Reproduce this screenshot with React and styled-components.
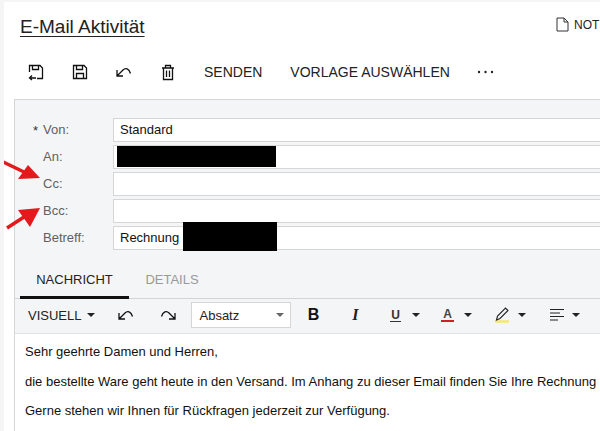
import React from 'react';
import styled, { createGlobalStyle } from 'styled-components';

const Global = createGlobalStyle`
  html, body { margin: 0; padding: 0; background: #f5f5f5; overflow: hidden; }
  body { width: 600px; height: 431px; font-family: "Liberation Sans", Arial, sans-serif; }
`;
const Page = styled.div`
  position: relative; width: 596px; height: 429px; margin: 2px 0 0 4px; background: #fff; overflow: hidden;
`;
const Header = styled.div`
  display: flex; justify-content: space-between; align-items: flex-start; height: 50px; padding: 13px 0 0 16px; box-sizing: border-box;
`;
const Title = styled.h1`
  margin: 0; font-size: 19px; line-height: 24px; font-weight: 400; color: #222; text-decoration: underline; text-underline-offset: 3px; text-decoration-thickness: 1px;
`;
const Notes = styled.div`
  display: flex; align-items: center; gap: 5px; font-size: 12px; color: #222; padding-top: 2px; width: 44px; overflow: hidden; white-space: nowrap; flex: none;
`;
const Toolbar = styled.div`
  display: flex; align-items: center; height: 47px; padding: 0 0 8px 23px; box-sizing: border-box;
`;
const IconBtn = styled.span`
  display: flex; width: 18px; height: 18px; margin-right: ${p => p.$gap}px; color: #111;
`;
const TextBtn = styled.span`
  font-size: 14px; color: #222; margin-right: ${p => p.$gap}px; white-space: nowrap;
`;
const Panel = styled.div`
  margin-left: 10px; width: 640px; height: 340px; border: 1px solid #d6d6d6; border-bottom: 0; background: #f4f5f7;
`;
const Form = styled.div`
  display: flex; flex-direction: column; gap: 3px; padding: 18px 0 0 0; height: 150px; box-sizing: border-box;
`;
const Row = styled.div`
  display: flex; align-items: center; height: 24px;
`;
const Label = styled.label`
  position: relative; width: 98px; padding-left: 28px; padding-bottom: 1px; box-sizing: border-box; font-size: 13px; color: #5f5f5f; flex: none;
`;
const Star = styled.span`
  position: absolute; left: 18px; top: 1px; color: #333; font-size: 13px;
`;
const Field = styled.div`
  position: relative; flex: 1; height: 24px; box-sizing: border-box; border: 1px solid #d6d6d6; background: #fff; padding-left: 6px; font-size: 13px; line-height: 22px; color: #111;
`;
const Redact = styled.span`
  position: absolute; top: ${p => p.$top}px; left: ${p => p.$left}px; width: ${p => p.$w}px; height: ${p => p.$h}px; background: #000;
`;
const Tabs = styled.div`
  display: flex; height: 49px; border-bottom: 1px solid #d4d4d6; padding-left: 5px; box-sizing: border-box;
`;
const Tab = styled.div`
  width: ${p => p.$w}px; height: 49px; box-sizing: border-box; display: flex; justify-content: center; padding-top: 22px; font-size: 13px; color: ${p => p.$active ? '#222' : '#999'}; border-bottom: ${p => p.$active ? '3px solid #111' : '0'};
`;
const EditorBar = styled.div`
  display: flex; align-items: center; height: 35px; box-sizing: border-box; border-bottom: 1px solid #e2e3e5; padding: 0 0 2px 13px;
`;
const BarText = styled.span`
  font-size: 13px; color: #222;
`;
const Caret = styled.span`
  display: inline-block; flex: none; width: 0; height: 0; border-left: 4px solid transparent; border-right: 4px solid transparent; border-top: 4px solid ${p => p.$c || '#222'}; margin-left: ${p => p.$ml ?? 6}px; margin-right: ${p => p.$mr ?? 0}px;
`;
const Select = styled.div`
  display: flex; align-items: center; justify-content: space-between; width: 100px; height: 26px; margin-right: 16px; padding: 0 6px 0 7px; box-sizing: border-box; border: 1px solid #d6d6d6; background: #fff; font-size: 13px; color: #222;
`;
const Tool = styled.span`
  display: flex; align-items: center; justify-content: center; width: ${p => p.$w}px; height: 18px; flex: none; margin-right: ${p => p.$mr || 0}px; color: #111;
`;
const Bold = styled.span`
  font-weight: 700; font-size: 16px; color: #111;
`;
const Ital = styled.span`
  font-family: "Liberation Serif", serif; font-style: italic; font-weight: 700; font-size: 16px; color: #222;
`;
const Under = styled.span`
  font-size: 12px; font-weight: 700; color: #333; border-bottom: 1px solid #333; line-height: 12px; padding: 0 1px;
`;
const ColorA = styled.span`
  font-size: 12px; font-weight: 700; color: #444; border-bottom: 2px solid #c8222a; line-height: 12px; padding: 0 2px;
`;
const Body = styled.div`
  background: #fff; height: 110px; padding: 11px 0 0 10px; font-size: 13px; color: #111; white-space: nowrap;
`;
const Para = styled.p`
  margin: 0 0 15.7px; line-height: 14px;
`;
const Arrow = styled.svg`
  position: absolute; left: ${p => p.$x}px; top: ${p => p.$y}px;
`;

const s = { fill: 'none', stroke: 'currentColor', strokeWidth: 1.3 };
const undoPath = 'M2 7v6h6M2.500 12.500L8 7c2.500-2.500 6-1.500 7.500 3.500';
const redoPath = 'M16 7v6h-6M15.500 12.500L10 7c-2.500-2.500-6-1.500-7.500 3.500';

export default function App() {
  return (
    <>
      <Global />
      <Page>
        <Header>
          <Title>E-Mail Aktivität</Title>
          <Notes>
            <svg width="13" height="15" viewBox="0 0 13 15" style={{flex:'none'}}><path d="M1 1h7l4 4v9H1z M8 1v4h4" fill="none" stroke="#333"/></svg>
            NOTIZEN
          </Notes>
        </Header>
        <Toolbar>
          <IconBtn $gap={26}><svg width="18" height="18" viewBox="0 0 18 18" {...s}><path d="M2.500 9V2.500h10.500l2.500 2.500v10.500H10M5.500 2.500V6.500h6v-4M9 15H3M5 12.500L2.500 15 5 17"/></svg></IconBtn>
          <IconBtn $gap={26}><svg width="18" height="18" viewBox="0 0 18 18" {...s}><path d="M2.500 2.500h10.500l2.500 2.500v10.500h-13zM5.500 2.500v4h6v-4M5.500 15.500v-5h7v5"/></svg></IconBtn>
          <IconBtn $gap={26}><svg width="18" height="18" viewBox="0 0 18 18" {...s}><path d={undoPath}/></svg></IconBtn>
          <IconBtn $gap={27}><svg width="18" height="18" viewBox="0 0 18 18" {...s}><path d="M3 5h12M6.500 5V2.500h5V5M4.500 5v11.500h9V5M7.500 7.500v6.500M10.500 7.500v6.500"/></svg></IconBtn>
          <TextBtn $gap={28}>SENDEN</TextBtn>
          <TextBtn $gap={27}>VORLAGE AUSWÄHLEN</TextBtn>
          <svg width="17" height="4" viewBox="0 0 17 4" fill="#222"><circle cx="2" cy="2" r="1.200"/><circle cx="8.500" cy="2" r="1.200"/><circle cx="15" cy="2" r="1.200"/></svg>
        </Toolbar>
        <Panel>
          <Form>
            <Row><Label><Star>*</Star>Von:</Label><Field>Standard</Field></Row>
            <Row><Label>An:</Label><Field><Redact $top={0} $left={3} $w={159} $h={21}/></Field></Row>
            <Row><Label>Cc:</Label><Field/></Row>
            <Row><Label>Bcc:</Label><Field/></Row>
            <Row><Label>Betreff:</Label><Field>Rechnung<Redact $top={-5} $left={69} $w={94} $h={29}/></Field></Row>
          </Form>
          <Tabs>
            <Tab $active $w={109}>NACHRICHT</Tab>
            <Tab $w={86}>DETAILS</Tab>
          </Tabs>
          <EditorBar>
            <BarText>VISUELL</BarText><Caret $mr={22}/>
            <Tool $w={18} $mr={24}><svg width="18" height="18" viewBox="0 0 18 18" {...s}><path d={undoPath}/></svg></Tool>
            <Tool $w={18} $mr={14}><svg width="18" height="18" viewBox="0 0 18 18" {...s}><path d={redoPath}/></svg></Tool>
            <Select>Absatz<Caret $c="#666" $ml={0}/></Select>
            <Tool $w={12} $mr={30}><Bold>B</Bold></Tool>
            <Tool $w={12} $mr={27}><Ital>I</Ital></Tool>
            <Tool $w={14}><Under>U</Under></Tool><Caret $ml={10} $mr={20}/>
            <Tool $w={14}><ColorA>A</ColorA></Tool><Caret $ml={10} $mr={23}/>
            <Tool $w={16}><svg width="16" height="18" viewBox="0 0 16 18"><path d="M0 15.500h14" stroke="#f3e96b" strokeWidth="2.500"/><path d="M1.500 14l1-4 8-8 2.500 2.500-8 8z" fill="none" stroke="#222" strokeWidth="1.100"/></svg></Tool><Caret $ml={7} $mr={23}/>
            <Tool $w={16}><svg width="16" height="14" viewBox="0 0 16 14" stroke="#222"><path d="M1 1.500h14M1 5h10M1 8.500h14M1 12h8"/></svg></Tool><Caret $ml={7}/>
          </EditorBar>
          <Body>
            <Para>Sehr geehrte Damen und Herren,</Para>
            <Para>die bestellte Ware geht heute in den Versand. Im Anhang zu dieser Email finden Sie Ihre Rechnung</Para>
            <Para>Gerne stehen wir Ihnen für Rückfragen jederzeit zur Verfügung.</Para>
          </Body>
        </Panel>
        <Arrow $x={-4} $y={158} width="42" height="22" viewBox="0 0 42 22"><path d="M1 1L24 12" stroke="#e3191c" strokeWidth="3.500"/><path d="M40 18L18 19 28 5z" fill="#e3191c"/></Arrow>
        <Arrow $x={-4} $y={203} width="42" height="26" viewBox="0 0 42 26"><path d="M7 23L24 12" stroke="#e3191c" strokeWidth="3.500"/><path d="M40 3L18 5 30 22z" fill="#e3191c"/></Arrow>
      </Page>
    </>
  );
}
